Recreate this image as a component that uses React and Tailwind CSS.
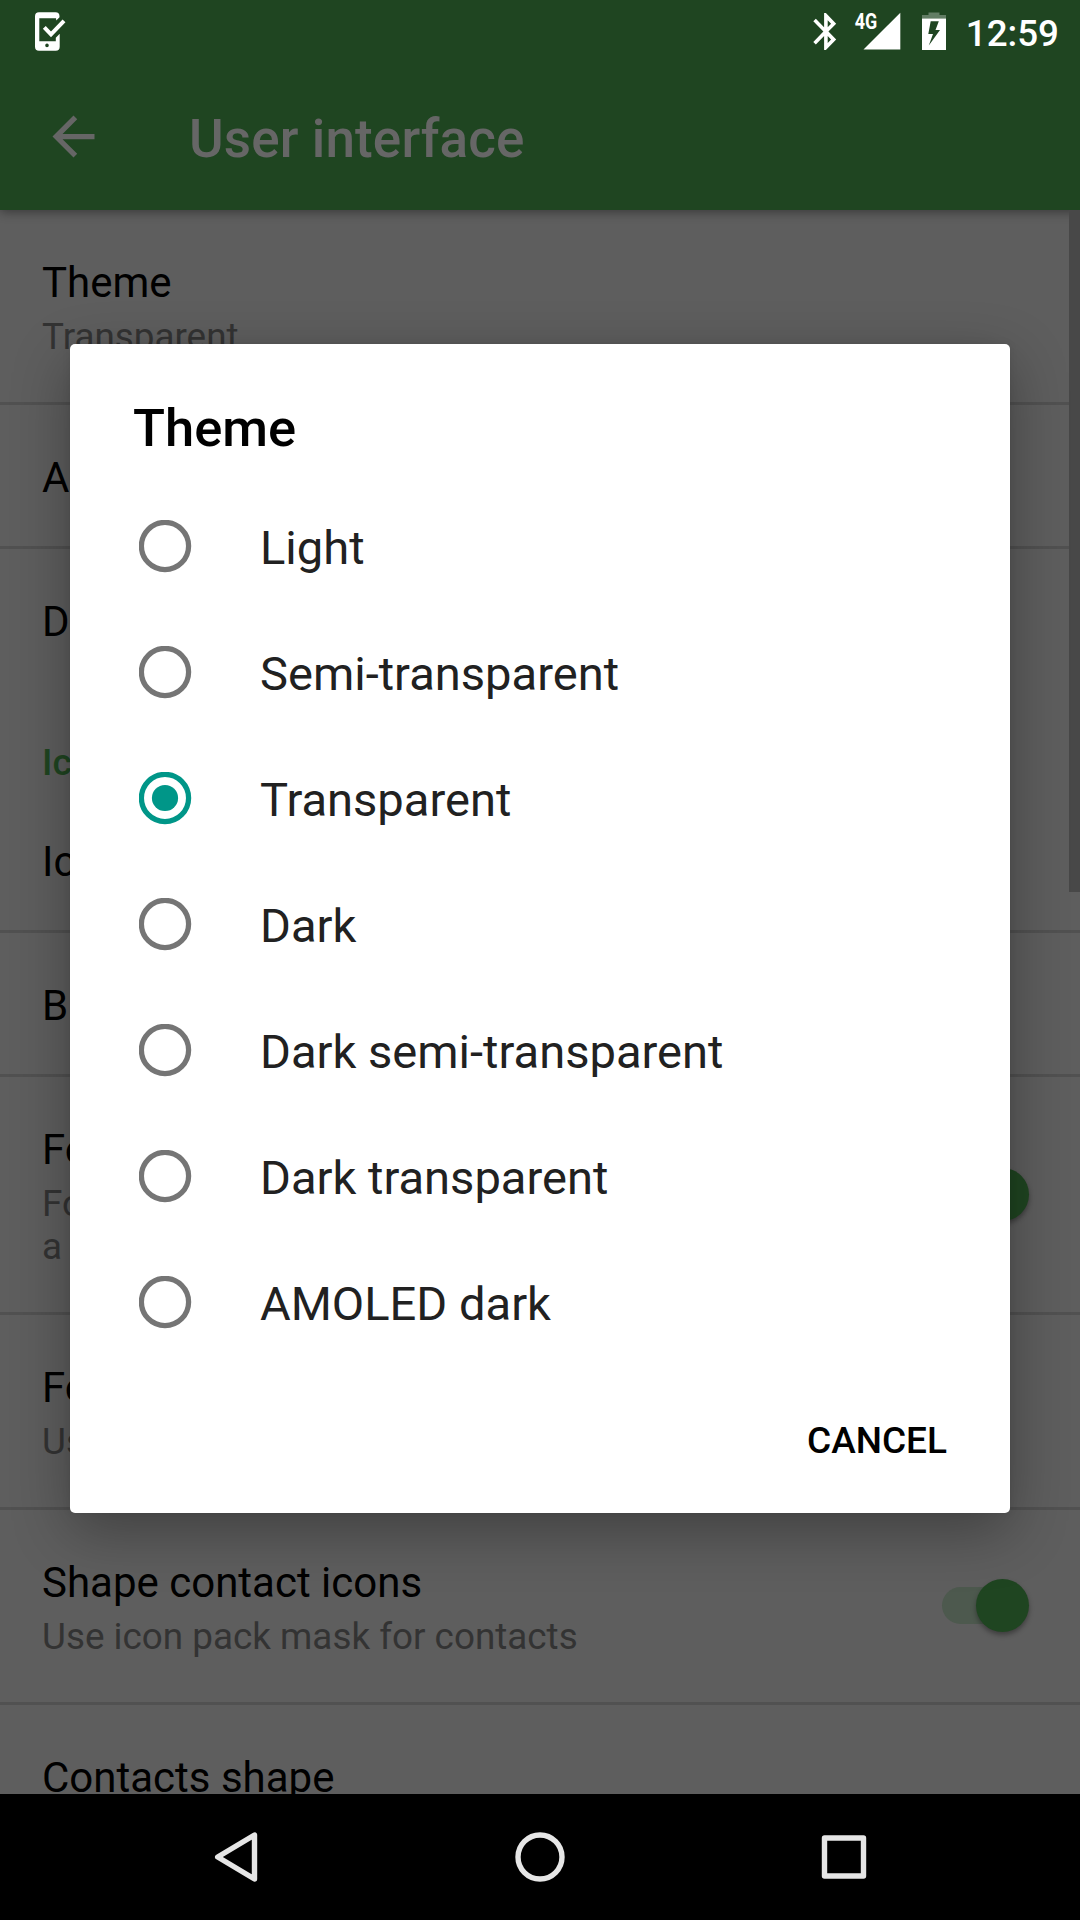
function Row({ title, sub, toggle, last }) {
  return (
    <div className={last ? "flex items-center px-[42px] shrink-0" : "flex items-center px-[42px] shrink-0 border-b-[3px] border-[#515151]"}>
      <div className="flex-1 pt-[48px] pb-[44px] whitespace-nowrap">
        <div className="text-[42px] leading-[49px] text-black">{title}</div>
        {sub && (
          <div className="mt-[8px] text-[36.85px] leading-[43px] text-[#333333]">
            {sub.map((line) => (
              <div key={line}>{line}</div>
            ))}
          </div>
        )}
      </div>
      {toggle && <Switch />}
    </div>
  );
}

function Switch() {
  return (
    <div className="mr-[9px] mb-[1px] flex h-[53px] w-[87px] shrink-0 items-center">
      <div className="h-[37px] w-[78px] shrink-0 rounded-full bg-[#4d594e]" />
      <div className="-ml-[44px] size-[53px] shrink-0 rounded-full bg-[#1f4521] shadow-[0_3px_5px_rgba(0,0,0,0.35)]" />
    </div>
  );
}

function Radio({ checked }) {
  return (
    <svg className="size-[53px] shrink-0" viewBox="0 0 53 53" fill="none">
      <circle cx="26" cy="26" r="23.600" strokeWidth="5.250" stroke={checked ? "#009688" : "#757575"} />
      {checked && <circle cx="26" cy="26" r="13.100" fill="#009688" />}
    </svg>
  );
}

const options = [
  "Light",
  "Semi-transparent",
  "Transparent",
  "Dark",
  "Dark semi-transparent",
  "Dark transparent",
  "AMOLED dark",
];

function StatusBar() {
  return (
    <div className="flex h-[63px] items-center text-white">
      <svg className="ml-[32px] h-[63px] w-[36px]" viewBox="32 0 36 63">
        <path
          fill="white"
          fillRule="evenodd"
          d="M39 12.300H55.500Q59.500 12.300 59.500 16.300V17.300L56.300 20.500L56 18.300H39.300V41.300H55.800V37.700L59.700 33.800V46.700Q59.700 50.700 55.700 50.700H39Q35 50.700 35 46.700V16.300Q35 12.300 39 12.300ZM47 43.600A1.800 1.800 0 1 0 47 47.200A1.800 1.800 0 1 0 47 43.600Z"
        />
        <path d="M44.300 27.300L51 34.300L64 20.800" fill="none" stroke="white" strokeWidth="4" />
      </svg>
      <svg className="ml-auto h-[63px] w-[160px]" viewBox="800 0 160 63">
        <path
          transform="translate(804.300 9.400) scale(1.800 1.850)"
          fill="white"
          d="M17.710 7.710L12 2h-1v7.590L6.410 5 5 6.410 10.590 12 5 17.590 6.410 19 11 14.410V22h1l5.710-5.710-4.300-4.290 4.300-4.290zM13 5.830l1.880 1.880L13 9.590V5.830zm1.880 10.460L13 18.170v-3.760l1.880 1.880z"
        />
        <path d="M900.300 12.800V49.500H863.500Z" fill="white" />
        <text x="854.700" y="29.200" fill="white" fontSize="21.500" fontWeight="700" textLength="22.500" lengthAdjust="spacingAndGlyphs">
          4G
        </text>
        <path d="M922 18.500V15H928.500V12.500H939.500V15H946V18.500Z" fill="white" fillOpacity="0.3" />
        <path fill="white" fillRule="evenodd" d="M922 18.500H946V50H922ZM930.700 21.300L928.300 34H933L928.800 45.500L940 30H935.500L938.800 21.300Z" />
      </svg>
      <div className="mt-[3px] mr-[21px] w-[99px] text-right text-[36.75px] leading-[43px] font-medium whitespace-nowrap">12:59</div>
    </div>
  );
}

export default function App() {
  return (
    <div className="relative flex h-[1920px] w-[1080px] flex-col overflow-hidden bg-[#5e5e5e] font-['Roboto',sans-serif]">
      <header className="relative h-[210px] shrink-0 bg-[#1f4521] shadow-[0_2px_10px_rgba(0,0,0,0.4)]">
        <StatusBar />
        <div className="flex h-[147px] items-center pl-[42px]">
          <svg className="size-[63px]" viewBox="0 0 24 24" fill="#666666">
            <path d="M20 11H7.830l5.590-5.590L12 4l-8 8 8 8 1.410-1.410L7.830 13H20v-2z" />
          </svg>
          <h1 className="mt-[5px] ml-[84px] text-[53px] leading-[62px] font-medium tracking-[0.12px] text-[#666666]">User interface</h1>
        </div>
      </header>

      <main className="flex min-h-0 flex-1 overflow-hidden">
        <div className="flex w-[1069px] shrink-0 flex-col overflow-visible">
          <div className="flex w-[1080px] flex-col">
            <Row title="Theme" sub={["Transparent"]} />
            <Row title="A" />
            <Row title="D" last />
            <div className="h-[99px] px-[42px] pt-[51px] text-[36.75px] leading-[43px] font-medium text-[#1f4521]">Ic</div>
            <Row title="Ic" />
            <Row title="B" />
            <Row title="Fo" sub={["Fo", "a"]} toggle />
            <Row title="Fo" sub={["Us"]} />
            <Row title="Shape contact icons" sub={["Use icon pack mask for contacts"]} toggle />
            <Row title="Contacts shape" last />
          </div>
        </div>
        <div className="z-10 h-[682px] w-[11px] shrink-0 bg-[#484848]" />
      </main>

      <nav className="relative z-20 h-[126px] shrink-0 bg-black">
        <svg className="h-full w-full" viewBox="0 1794 1080 126" fill="none" stroke="#e6e6e6" strokeWidth="5.400" strokeLinejoin="round">
          <path d="M254.500 1835V1879L217.700 1857Z" />
          <circle cx="540" cy="1857" r="22" />
          <rect x="824.500" y="1838" width="39" height="38" />
        </svg>
      </nav>

      <div
        role="dialog"
        className="absolute top-[344px] left-[70px] z-10 flex h-[1169px] w-[940px] flex-col rounded-[5px] bg-white shadow-[0_18px_58px_rgba(0,0,0,0.32),0_0_8px_rgba(0,0,0,0.08)]"
      >
        <h2 className="mt-[53px] ml-[63px] text-[52.5px] leading-[62px] font-medium text-black">Theme</h2>
        <ul className="mt-[24px] flex flex-col">
          {options.map((label) => (
            <li key={label} className="flex h-[126px] items-center pl-[69px]">
              <Radio checked={label === "Transparent"} />
              <span className="mt-[4px] ml-[68px] text-[47.1px] leading-[56px] text-[#212121]">{label}</span>
            </li>
          ))}
        </ul>
        <button className="mt-[54px] mr-[63px] self-end text-[37px] leading-[43px] font-medium text-black">CANCEL</button>
      </div>
    </div>
  );
}
